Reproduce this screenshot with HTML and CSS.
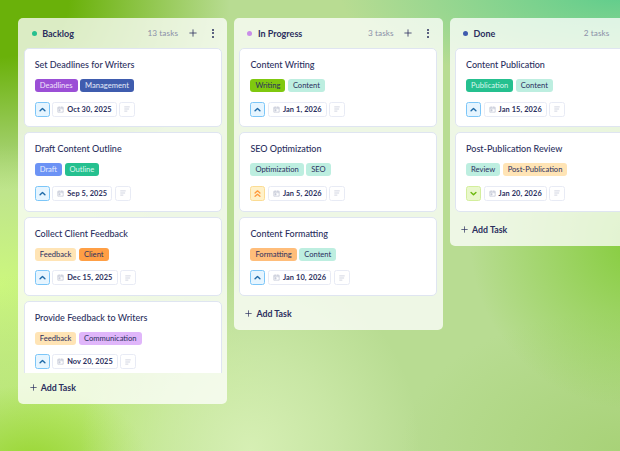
FILE: index.html
```html
<!DOCTYPE html>
<html>
    <head>
        <title>Task Board</title>
        <link rel="stylesheet" href="styles.css">
    </head>
    <body>
        <svg class="sprites" width="0" height="0">
            <symbol id="i-up" viewBox="0 0 10 10"><path d="M2.8 6.1 5 4l2.2 2.1" fill="none" stroke="currentColor" stroke-width="1.3" stroke-linecap="round" stroke-linejoin="round"/></symbol>
            <symbol id="i-down" viewBox="0 0 10 10"><path d="M2.8 4 5 6.1 7.2 4" fill="none" stroke="currentColor" stroke-width="1.3" stroke-linecap="round" stroke-linejoin="round"/></symbol>
            <symbol id="i-top" viewBox="0 0 10 10"><path d="M2.8 4.6 5 2.6l2.2 2M2.8 7.6 5 5.6l2.2 2" fill="none" stroke="currentColor" stroke-width="1.2" stroke-linecap="round" stroke-linejoin="round"/></symbol>
            <symbol id="i-cal" viewBox="0 0 10 10"><path d="M1.2 1.8h7.6v7H1.2zM1.2 3.9h7.6M3.2.8v1.6M6.8.8v1.6M2.8 5.4h1.6v1.6H2.8z" fill="none" stroke="currentColor" stroke-width=".75"/></symbol>
            <symbol id="i-notes" viewBox="0 0 10 10"><path d="M.5 1.5h9M.5 5h8M.5 8.5h5" fill="none" stroke="currentColor" stroke-width="1"/></symbol>
            <symbol id="i-plus" viewBox="0 0 10 10"><path d="M5 .5v9M.5 5h9" fill="none" stroke="currentColor" stroke-width="1"/></symbol>
        </svg>
        <div class="tablero">

            <section class="coluna">
                <header class="coluna-topo">
                    <span class="ponto verde"></span>
                    <h2>Backlog</h2>
                    <span class="contagem">13 tasks</span>
                    <svg class="mais"><use href="#i-plus"/></svg>
                    <span class="menu"><i></i><i></i><i></i></span>
                </header>
                <div class="lista">
                    <article class="cartao">
                        <h3>Set Deadlines for Writers</h3>
                        <div class="tags"><span class="tag roxo">Deadlines</span><span class="tag azul">Management</span></div>
                        <div class="rodape">
                            <span class="prioridade media"><svg><use href="#i-up"/></svg></span>
                            <span class="data"><svg><use href="#i-cal"/></svg>Oct 30, 2025</span>
                            <span class="notas"><svg><use href="#i-notes"/></svg></span>
                        </div>
                    </article>
                    <article class="cartao">
                        <h3>Draft Content Outline</h3>
                        <div class="tags"><span class="tag celeste">Draft</span><span class="tag esmeralda">Outline</span></div>
                        <div class="rodape">
                            <span class="prioridade media"><svg><use href="#i-up"/></svg></span>
                            <span class="data"><svg><use href="#i-cal"/></svg>Sep 5, 2025</span>
                            <span class="notas"><svg><use href="#i-notes"/></svg></span>
                        </div>
                    </article>
                    <article class="cartao">
                        <h3>Collect Client Feedback</h3>
                        <div class="tags"><span class="tag creme">Feedback</span><span class="tag laranja">Client</span></div>
                        <div class="rodape">
                            <span class="prioridade media"><svg><use href="#i-up"/></svg></span>
                            <span class="data"><svg><use href="#i-cal"/></svg>Dec 15, 2025</span>
                            <span class="notas"><svg><use href="#i-notes"/></svg></span>
                        </div>
                    </article>
                    <article class="cartao">
                        <h3>Provide Feedback to Writers</h3>
                        <div class="tags"><span class="tag creme">Feedback</span><span class="tag lilas">Communication</span></div>
                        <div class="rodape">
                            <span class="prioridade media"><svg><use href="#i-up"/></svg></span>
                            <span class="data"><svg><use href="#i-cal"/></svg>Nov 20, 2025</span>
                            <span class="notas"><svg><use href="#i-notes"/></svg></span>
                        </div>
                    </article>
                </div>
                <footer class="adicionar"><svg><use href="#i-plus"/></svg>Add Task</footer>
            </section>

            <section class="coluna">
                <header class="coluna-topo">
                    <span class="ponto lavanda"></span>
                    <h2>In Progress</h2>
                    <span class="contagem">3 tasks</span>
                    <svg class="mais"><use href="#i-plus"/></svg>
                    <span class="menu"><i></i><i></i><i></i></span>
                </header>
                <div class="lista">
                    <article class="cartao">
                        <h3>Content Writing</h3>
                        <div class="tags"><span class="tag lima">Writing</span><span class="tag menta">Content</span></div>
                        <div class="rodape">
                            <span class="prioridade media"><svg><use href="#i-up"/></svg></span>
                            <span class="data"><svg><use href="#i-cal"/></svg>Jan 1, 2026</span>
                            <span class="notas"><svg><use href="#i-notes"/></svg></span>
                        </div>
                    </article>
                    <article class="cartao">
                        <h3>SEO Optimization</h3>
                        <div class="tags"><span class="tag menta">Optimization</span><span class="tag menta">SEO</span></div>
                        <div class="rodape">
                            <span class="prioridade alta"><svg><use href="#i-top"/></svg></span>
                            <span class="data"><svg><use href="#i-cal"/></svg>Jan 5, 2026</span>
                            <span class="notas"><svg><use href="#i-notes"/></svg></span>
                        </div>
                    </article>
                    <article class="cartao">
                        <h3>Content Formatting</h3>
                        <div class="tags"><span class="tag pessego">Formatting</span><span class="tag menta">Content</span></div>
                        <div class="rodape">
                            <span class="prioridade media"><svg><use href="#i-up"/></svg></span>
                            <span class="data"><svg><use href="#i-cal"/></svg>Jan 10, 2026</span>
                            <span class="notas"><svg><use href="#i-notes"/></svg></span>
                        </div>
                    </article>
                </div>
                <footer class="adicionar"><svg><use href="#i-plus"/></svg>Add Task</footer>
            </section>

            <section class="coluna">
                <header class="coluna-topo">
                    <span class="ponto anil"></span>
                    <h2>Done</h2>
                    <span class="contagem">2 tasks</span>
                    <svg class="mais"><use href="#i-plus"/></svg>
                    <span class="menu"><i></i><i></i><i></i></span>
                </header>
                <div class="lista">
                    <article class="cartao">
                        <h3>Content Publication</h3>
                        <div class="tags"><span class="tag esmeralda">Publication</span><span class="tag menta">Content</span></div>
                        <div class="rodape">
                            <span class="prioridade media"><svg><use href="#i-up"/></svg></span>
                            <span class="data"><svg><use href="#i-cal"/></svg>Jan 15, 2026</span>
                            <span class="notas"><svg><use href="#i-notes"/></svg></span>
                        </div>
                    </article>
                    <article class="cartao">
                        <h3>Post-Publication Review</h3>
                        <div class="tags"><span class="tag menta">Review</span><span class="tag creme">Post-Publication</span></div>
                        <div class="rodape">
                            <span class="prioridade baixa"><svg><use href="#i-down"/></svg></span>
                            <span class="data"><svg><use href="#i-cal"/></svg>Jan 20, 2026</span>
                            <span class="notas"><svg><use href="#i-notes"/></svg></span>
                        </div>
                    </article>
                </div>
                <footer class="adicionar"><svg><use href="#i-plus"/></svg>Add Task</footer>
            </section>

        </div>
    </body>
</html>
```

FILE: styles.css
```css
html, body{
    height: 100%;
}
body{
    margin: 0;
    overflow: hidden;
    font-family: "Lato", "Liberation Sans", sans-serif;
    color: #2b2f5e;
    background:
        radial-gradient(170px 190px at 250px 450px, #d6efb4 0%, rgba(214,239,180,0.55) 50%, rgba(214,239,180,0) 100%),
        radial-gradient(120px 80px at 30px 465px, #98d630 0%, rgba(152,214,48,0) 100%),
        radial-gradient(220px 150px at 60px 420px, #bcea74 0%, rgba(188,234,116,0) 100%),
        radial-gradient(190px 140px at 0px 285px, #ccf77e 0%, rgba(204,247,126,0) 100%),
        radial-gradient(170px 170px at 640px 240px, #84cc3a 0%, rgba(132,204,58,0) 100%),
        radial-gradient(280px 90px at 620px -5px, #5fcd8c 0%, rgba(95,205,140,0) 100%),
        radial-gradient(230px 190px at 0px 0px, #6ab10a 30%, rgba(106,177,10,0) 100%),
        radial-gradient(220px 140px at 620px 451px, #a8d278 0%, rgba(168,210,120,0) 100%),
        #b8dc92;
}
.sprites{
    position: absolute;
}
.tablero{
    display: flex;
    align-items: flex-start;
    gap: 7px;
    padding: 18.3px 0 0 18.3px;
}
.coluna{
    flex: 0 0 208.7px;
    display: flex;
    flex-direction: column;
    box-sizing: border-box;
    padding: 0 5.4px;
    background-color: rgba(255,255,255,0.76);
    border-radius: 5px;
}
.coluna:first-child{
    height: 386px;
}
.coluna-topo{
    display: flex;
    align-items: center;
    height: 30px;
    padding: 0 0 0 8px;
}
.coluna-topo h2{
    margin: 0 0 0 5.5px;
    font-size: 9px;
    font-weight: 700;
}
.ponto{
    width: 5px;
    height: 5px;
    border-radius: 50%;
}
.verde{ background-color: #25c08f; }
.lavanda{ background-color: #c98de8; }
.anil{ background-color: #3f5cae; }
.contagem{
    margin-left: auto;
    font-size: 8.2px;
    letter-spacing: 0.1px;
    color: #8b90a8;
}
.mais{
    width: 8px;
    height: 8px;
    margin-left: 10.5px;
}
.menu{
    display: flex;
    flex-direction: column;
    gap: 1.4px;
    margin: 0 8px 0 15px;
}
.menu i{
    width: 2px;
    height: 2px;
    border-radius: 50%;
    background-color: #2b2f5e;
}
.lista{
    flex: 1;
    min-height: 0;
    overflow: hidden;
    display: flex;
    flex-direction: column;
    gap: 5px;
    padding-bottom: 3px;
}
.cartao{
    flex: none;
    height: 79.2px;
    box-sizing: border-box;
    padding: 10px 10px 0;
    background-color: #fff;
    border: 1px solid #dfe5f1;
    border-radius: 5px;
}
.cartao h3{
    margin: 0;
    font-size: 9px;
    font-weight: 500;
    line-height: 11px;
}
.tags{
    display: flex;
    gap: 2.5px;
    margin-top: 9px;
}
.tag{
    height: 13px;
    line-height: 13px;
    padding: 0 5px;
    font-size: 7.6px;
    border-radius: 3px;
}
.roxo{ background-color: #9b4fd6; color: #f0e2fb; }
.azul{ background-color: #3f5cae; color: #e3e9f8; }
.celeste{ background-color: #6c93f5; color: #e6edfe; }
.esmeralda{ background-color: #25c08f; color: #dbf7ee; }
.creme{ background-color: #ffe4b5; }
.laranja{ background-color: #ff9f45; }
.lilas{ background-color: #e0b6fa; }
.lima{ background-color: #7fc80f; }
.menta{ background-color: #bdeee0; }
.pessego{ background-color: #ffbd7a; }
.rodape{
    display: flex;
    gap: 2.5px;
    margin-top: 9.5px;
}
.rodape > span{
    display: flex;
    align-items: center;
    justify-content: center;
    box-sizing: border-box;
    height: 15px;
    border: 1px solid #e8ebf5;
    border-radius: 2.5px;
    background-color: #fff;
}
.prioridade svg{
    width: 11px;
    height: 11px;
}
.rodape > .prioridade{
    width: 15px;
}
.rodape > .media{
    background-color: #e6f5ff;
    border-color: #7cc6f8;
    color: #1f6aa8;
}
.rodape > .alta{
    background-color: #fff1c9;
    border-color: #fbdc94;
    color: #ff9a3d;
}
.rodape > .baixa{
    background-color: #e9f7cc;
    border-color: #d3ee9c;
    color: #6cb80f;
}
.rodape > .data{
    padding: 0 4px;
    font-size: 7.4px;
    font-weight: 700;
    letter-spacing: 0.1px;
}
.data svg{
    width: 7px;
    height: 7px;
    margin-right: 3px;
    color: #a9aec4;
}
.rodape > .notas{
    width: 16px;
}
.notas svg{
    width: 6px;
    height: 6px;
    color: #b4b9cc;
}
.adicionar{
    flex: none;
    display: flex;
    align-items: center;
    height: 31px;
    padding: 0 0 2px 6px;
    box-sizing: border-box;
    font-size: 8.8px;
    font-weight: 700;
}
.adicionar svg{
    width: 7px;
    height: 7px;
    margin-right: 4px;
}
```
